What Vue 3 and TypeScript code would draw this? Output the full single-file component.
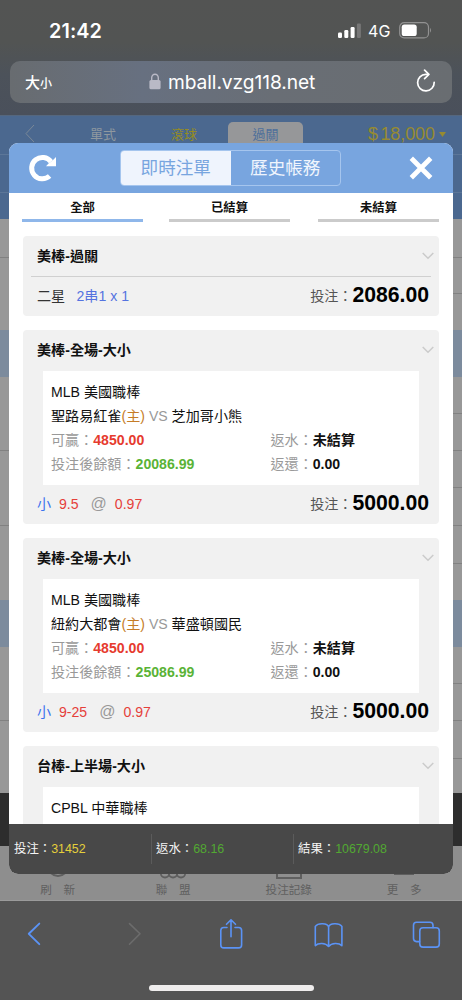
<script setup lang="ts">
interface Bet {
  title: string
  league: string
  home?: string
  away?: string
  balance?: string
  pick?: string
}

const bets: Bet[] = [
  { title: '美棒-全場-大小', league: 'MLB 美國職棒', home: '聖路易紅雀', away: '芝加哥小熊', balance: '20086.99', pick: '9.5' },
  { title: '美棒-全場-大小', league: 'MLB 美國職棒', home: '紐約大都會', away: '華盛頓國民', balance: '25086.99', pick: '9-25' },
  { title: '台棒-上半場-大小', league: 'CPBL 中華職棒' },
]

const tabs: string[] = ['全部', '已結算', '未結算']

interface Row { h: number; kind: string }
const rows: Row[] = [
  { h: 39, kind: '' }, { h: 36, kind: 'half' }, { h: 36, kind: 'plain' }, { h: 47, kind: 'blue' },
  { h: 37, kind: 'half' }, { h: 37, kind: '' }, { h: 37, kind: 'half' }, { h: 38, kind: '' },
  { h: 38, kind: 'half' }, { h: 36, kind: 'plain' }, { h: 47, kind: 'blue' }, { h: 37, kind: 'half' },
  { h: 37, kind: '' }, { h: 38, kind: 'half' }, { h: 34, kind: 'plain' },
]
</script>

<template>
  <div class="screen">
    <header class="browser">
      <div class="status">
        <span class="time">21:42</span>
        <svg class="signal" width="24" height="16" viewBox="0 0 24 16">
          <rect x="0" y="9.5" width="4" height="5.5" rx="1.2" fill="#fff" />
          <rect x="6.3" y="7" width="4" height="8" rx="1.2" fill="#fff" />
          <rect x="12.6" y="4" width="4" height="11" rx="1.2" fill="#fff" />
          <rect x="18.9" y="0.5" width="4" height="14.5" rx="1.2" fill="#777" />
        </svg>
        <span class="net">4G</span>
        <svg class="battery" width="34" height="17" viewBox="0 0 34 17">
          <rect x="0.7" y="0.7" width="28.8" height="15.2" rx="4.5" fill="none" stroke="#929292" stroke-width="1.2" />
          <rect x="2.7" y="2.6" width="15" height="11.4" rx="2.6" fill="#fff" />
          <path d="M31 5.7q2 2.4 0 5z" fill="#929292" />
        </svg>
      </div>
      <div class="urlbar">
        <span class="size">大<small>小</small></span>
        <svg class="lock" width="12" height="17" viewBox="0 0 12 17">
          <path d="M2.7 8V4.800a3.300 3.600 0 0 1 6.600 0V8" fill="none" stroke="#b9b9c6" stroke-width="1.400" />
          <rect x="0.4" y="7" width="11.2" height="9.3" rx="1.6" fill="#b9b9c6" />
        </svg>
        <span class="host">mball.vzg118.net</span>
        <svg class="reload" width="20" height="24" viewBox="0 0 20 24">
          <path d="M12 5.300H9.800A8.300 8.300 0 1 0 18.200 13.300" fill="none" stroke="#fff" stroke-width="1.700" stroke-linecap="round" />
          <path d="M8.600 1.200l4.300 4.200-4.300 4.200" fill="none" stroke="#fff" stroke-width="1.700" stroke-linecap="round" stroke-linejoin="round" />
        </svg>
      </div>
    </header>

    <div class="nav">
      <svg class="nav-back" width="12" height="20" viewBox="0 0 12 20"><path d="M10 1L2 9.6 10 18" fill="none" stroke="#7b8998" stroke-width="1" /></svg>
      <span class="n1">單式</span>
      <span class="n2">滾球</span>
      <span class="n3">過關</span>
      <span class="money">$<i></i>18,000</span>
      <svg class="caret" width="7" height="5" viewBox="0 0 7 5"><path d="M0 0h7L3.5 5z" fill="#978b31" /></svg>
    </div>
    <div class="subnav"></div>
    <div class="rows">
      <div v-for="(r, i) in rows" :key="i" class="row" :class="r.kind" :style="{ height: r.h + 'px' }"></div>
    </div>
    <div class="band"></div>
    <div class="pagebar">
      <div class="pb"><svg width="30" height="30" viewBox="0 0 30 30"><circle cx="15" cy="16.500" r="9.500" fill="none" stroke="#5f5f5f" stroke-width="2" /></svg><span>刷　新</span></div>
      <div class="pb"><svg width="30" height="30" viewBox="0 0 30 30"><g fill="none" stroke="#5f5f5f" stroke-width="1.800"><circle cx="7" cy="23.300" r="4.200" /><circle cx="15" cy="23.300" r="4.200" /><circle cx="23" cy="23.300" r="4.200" /></g></svg><span>聯　盟</span></div>
      <div class="pb"><svg width="30" height="30" viewBox="0 0 30 30"><rect x="3" y="4" width="24" height="24" fill="none" stroke="#5f5f5f" stroke-width="2" /></svg><span>投注記錄</span></div>
      <div class="pb"><svg width="30" height="30" viewBox="0 0 30 30"><path d="M5 7h20M5 15h20M5 23.500h20" stroke="#5f5f5f" stroke-width="3" /></svg><span>更　多</span></div>
    </div>

    <footer class="toolbar">
      <div class="tools">
        <svg width="462" height="60" viewBox="0 0 462 60" fill="none" stroke="#5b93f5" stroke-width="1.6" stroke-linecap="round" stroke-linejoin="round">
          <path d="M39.300 21.600L28.800 31.800l10.500 10.400" stroke-width="1.900" />
          <path d="M129.500 21.600L140 31.800l-10.500 10.400" stroke="#6c6c6c" />
          <path d="M227 25.500h-3.200q-3 0-3 3v14.400q0 3 3 3h14.800q3 0 3-3V28.500q0-3-3-3H235M231 34.800V18M226.500 22.300L231 17.800l4.500 4.500" />
          <path d="M328.600 25c-1-4-10.500-4.500-13.300-.6v19.200c3-3 10.300-3 13.300.8 3-3.800 10.300-3.800 13.300-.8V24.400c-2.800-3.900-12.300-3.400-13.300.6zM328.600 25v19.400" />
          <rect x="419.800" y="25.800" width="19.500" height="19.300" rx="3.200" />
          <path d="M419.500 39.600h-3q-3-.2-3-3V23.300q0-3 3-3H430q3 0 3 3v2.300" />
        </svg>
      </div>
      <div class="home"></div>
    </footer>

    <section class="modal">
      <div class="mhead">
        <svg class="refresh" width="30" height="30" viewBox="0 0 30 30">
          <path d="M21.600 23A10.700 10.700 0 1 1 23 8.800" fill="none" stroke="#fff" stroke-width="5" />
          <path d="M28 4v9.200H18L20.500 10.500 24.500 7.500z" fill="#fff" />
        </svg>
        <div class="switch"><span class="on">即時注單</span><span>歷史帳務</span></div>
        <svg class="close" width="24" height="24" viewBox="0 0 24 24"><path d="M2.300 2.300l19.400 19.400M21.700 2.300L2.300 21.700" stroke="#fff" stroke-width="4.800" /></svg>
      </div>
      <div class="content">
        <div class="tabs">
          <div v-for="(t, i) in tabs" :key="t" class="tab" :class="{ active: i === 0 }">{{ t }}</div>
        </div>
        <div class="cards">
          <article class="card combo">
            <div class="chead"><b>美棒-過關</b><svg width="12" height="8" viewBox="0 0 12 8"><path d="M.7 1L6 6.300 11.300 1" fill="none" stroke="#cbcbcb" stroke-width="1.500" /></svg></div>
            <div class="cfoot">
              <span class="two">二星</span><span class="parlay">2串1 x 1</span>
              <span class="stake">投注：<b>2086.00</b></span>
            </div>
          </article>
          <article v-for="(b, i) in bets" :key="i" class="card">
            <div class="chead"><b>{{ b.title }}</b><svg width="12" height="8" viewBox="0 0 12 8"><path d="M.7 1L6 6.300 11.300 1" fill="none" stroke="#cbcbcb" stroke-width="1.500" /></svg></div>
            <div class="detail">
              <div>{{ b.league }}</div>
              <template v-if="b.home">
                <div>{{ b.home }}<span class="host-mark">(主)</span> <span class="vs">VS</span> {{ b.away }}</div>
                <div class="pair"><span>可贏：<b class="red">4850.00</b></span><span>返水：<b>未結算</b></span></div>
                <div class="pair"><span>投注後餘額：<b class="green">{{ b.balance }}</b></span><span>返還：<b>0.00</b></span></div>
              </template>
            </div>
            <div v-if="b.home" class="cfoot">
              <span class="under">小</span><span class="pick">{{ b.pick }}</span><span class="at">@</span><span class="pick">0.97</span>
              <span class="stake">投注：<b>5000.00</b></span>
            </div>
          </article>
        </div>
      </div>
      <div class="totals">
        <div>投注：<span class="y">31452</span></div>
        <div>返水：<span class="g">68.16</span></div>
        <div>結果：<span class="g">10679.08</span></div>
      </div>
    </section>
  </div>
</template>

<style>
html, body { margin: 0; background: #545454; }
</style>

<style scoped>
* { box-sizing: border-box; }
.screen { position: relative; width: 462px; height: 1000px; overflow: hidden; font-family: "Liberation Sans", "Noto Sans CJK TC", sans-serif; background: #545454; white-space: nowrap; }
.browser { height: 115px; background: linear-gradient(#535453 0, #525453 42px, #4c525a 75px, #4a505b 115px); color: #fff; font-family: Inter, "Noto Sans CJK TC", sans-serif; }
.status { display: flex; align-items: center; height: 60.5px; padding-left: 49px; }
.time { font-size: 19.8px; font-weight: 600; width: 289px; line-height: 24px; letter-spacing: .1px; padding-top: 1px; }
.signal { margin-top: 1px; }
.net { font-size: 16px; width: 24px; margin: 2px 7px 0 6px; letter-spacing: .1px; }
.battery { margin-top: 1px; }
.urlbar { margin: 0 10px; height: 42.5px; border-radius: 10px; background: linear-gradient(90deg, #686c70, #677080 30%, #696e75 60%, #696d71); display: flex; align-items: center; }
.size { width: 124px; padding: 3px 0 0 15px; font-size: 15px; font-weight: 500; line-height: 20px; }
.size small { font-size: 12px; }
.lock { margin-left: 14.5px; }
.host { font-size: 19.2px; width: 160px; margin-left: 7.5px; line-height: 24px; padding-top: 1px; letter-spacing: -.08px; }
.reload { margin-left: 87.5px; margin-top: -2px; }
.nav { height: 38.5px; background: #4b688f; display: flex; padding-left: 24px; color: #8f989f; font-size: 13px; line-height: 38px; border-top: 1px solid #55677e; }
.nav-back { margin-top: 8px; }
.n1 { margin-left: 54px; width: 81px; }
.n2 { width: 57px; color: #958c22; }
.n3 { width: 75px; height: 31px; margin-top: 6px; line-height: 26px; border-radius: 5px 5px 0 0; background: #969799; color: #4d6f9b; text-align: center; }
.money { margin-left: 65px; width: 71px; color: #978b31; font-size: 18px; letter-spacing: -.1px; line-height: 37px; }
.money i { display: inline-block; width: 2.5px; }
.caret { margin-top: 16px; }
.subnav { height: 65.5px; background: linear-gradient(#5c7698 0 1px, #4b688f 1px 38px, #5c7698 38px 39px, #4b688f 39px); }
.rows { height: 574px; overflow: hidden; }
.row { background: #989898; border-bottom: 1px solid #818181; }
.row.half { border-bottom: 0; background: linear-gradient(#818181, #818181) right bottom / 231px 1px no-repeat #989898; }
.row.plain { border-bottom: 0; }
.row.blue { background: #7c8b9d; border-bottom: 0; }
.band { height: 53px; background: #2d2d2d; }
.pagebar { height: 55px; background: #8e8e8e; display: flex; border-bottom: 1px solid #9b9b9b; }
.pb { width: 115.5px; display: flex; flex-direction: column; align-items: center; color: #606060; font-size: 11.6px; line-height: 20px; padding-top: 4px; }
.pb svg { flex: none; }
.toolbar { height: 99px; background: #545454; padding-top: 1px; }
.tools { height: 83px; }
.tools svg { display: block; }
.home { width: 165px; height: 6px; border-radius: 3px; background: #efeded; margin: 0 auto; }
.modal { position: absolute; left: 9px; top: 143px; width: 443.5px; height: 731px; border-radius: 9px; overflow: hidden; background: #fff; display: flex; flex-direction: column; }
.mhead { height: 49.5px; flex: none; background: #78a5df; display: flex; align-items: center; padding: 0 20px 0 19px; }
.refresh { margin-top: 0; }
.switch { display: flex; width: 221px; height: 36px; margin-left: 62px; margin-top: 1px; border: 1px solid #a5c5ee; border-radius: 4px; overflow: hidden; font-size: 17.6px; line-height: 35px; color: #f0f5fd; }
.switch span { flex: 1; text-align: center; }
.switch .on { background: #eff4fd; color: #78a5df; }
.close { margin-left: auto; margin-top: 1px; }
.content { flex: 1; min-height: 0; overflow: hidden; }
.tabs { display: flex; gap: 26px; padding-left: 13px; height: 43px; }
.tab { width: 121px; height: 29.5px; border-bottom: 3px solid #cbcbcb; text-align: center; font-size: 12.3px; line-height: 30px; font-weight: 700; color: #111; }
.tab:last-child { margin-left: 2px; }
.tab.active { border-color: #8fb7ea; }
.cards { display: flex; flex-direction: column; gap: 14px; padding: 0 13.5px; }
.card { background: #f1f1f1; border-radius: 4px; height: 194px; font-size: 14.1px; color: #111; flex: none; }
.card.combo { height: 80.5px; }
.chead { height: 40.5px; display: flex; justify-content: space-between; align-items: center; padding: 0 5px 0 14.5px; }
.chead b { padding-bottom: 2px; }
.combo .chead { height: 41.5px; margin: 0 8.5px; padding: 0 0 0 6px; border-bottom: 1px solid #d0d0d0; }
.combo .chead svg { margin-right: -3.5px; }
.detail { height: 114px; margin: 0 20px 0 20.5px; padding: 9px 8px; background: #fff; line-height: 24px; }
.detail > div { height: 24px; }
.host-mark { color: #c57c27; }
.vs { color: #999; }
.pair { display: flex; color: #999; }
.pair span:first-child { width: 219.5px; }
.pair b { color: #111; }
.pair b.red { color: #e63b2e; }
.pair b.green { color: #5ab336; }
.cfoot { display: flex; height: 39px; align-items: center; padding: 0 10px 0 14.5px; line-height: 24px; }
.two { width: 39.5px; color: #333; }
.combo .cfoot { height: 38px; }
.parlay { color: #5573e0; }
.stake { margin-left: auto; color: #555; display: flex; align-items: center; }
.stake b { font-size: 21.2px; color: #000; margin-top: -2px; }
.under { color: #3b72ee; width: 22px; }
.pick { color: #e5403a; }
.at { color: #999; font-size: 16px; margin: 0 8px 0 12px; }
.totals { height: 50px; flex: none; background: #484848; display: flex; align-items: center; color: #f5f5f5; font-size: 12.4px; }
.totals div { height: 30px; width: 142px; line-height: 30px; padding-left: 4px; border-right: 1px solid #5b5b5b; }
.totals div:first-child { width: 143px; padding-left: 5px; }
.totals div:last-child { border: 0; }
.y { color: #e5cf3b; }
.g { color: #52a832; }
</style>
